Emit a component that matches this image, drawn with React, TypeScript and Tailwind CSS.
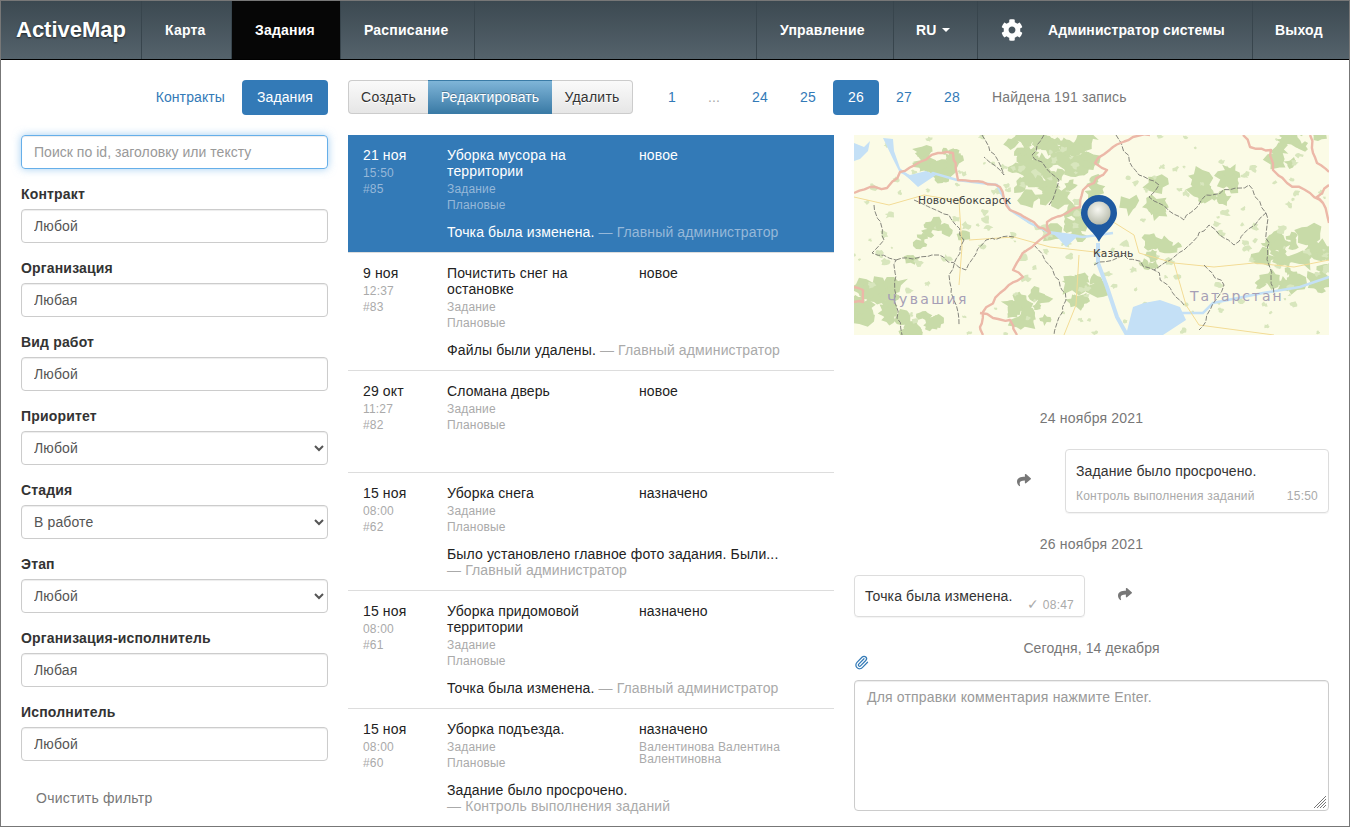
import { FaCog, FaShare } from 'react-icons/fa';
import { Paperclip } from 'lucide-react';

type Task = {
  date: string;
  time: string;
  id: string;
  title: string;
  status: string;
  assignee?: string;
  comment?: string;
  author?: string;
  active?: boolean;
};

const tasks: Task[] = [
  { date: '21 ноя', time: '15:50', id: '#85', title: 'Уборка мусора на территории', status: 'новое', comment: 'Точка была изменена.', author: '— Главный администратор', active: true },
  { date: '9 ноя', time: '12:37', id: '#83', title: 'Почистить снег на остановке', status: 'новое', comment: 'Файлы были удалены.', author: '— Главный администратор' },
  { date: '29 окт', time: '11:27', id: '#82', title: 'Сломана дверь', status: 'новое' },
  { date: '15 ноя', time: '08:00', id: '#62', title: 'Уборка снега', status: 'назначено', comment: 'Было установлено главное фото задания. Были...', author: '— Главный администратор' },
  { date: '15 ноя', time: '08:00', id: '#61', title: 'Уборка придомовой территории', status: 'назначено', comment: 'Точка была изменена.', author: '— Главный администратор' },
  { date: '15 ноя', time: '08:00', id: '#60', title: 'Уборка подъезда.', status: 'назначено', assignee: 'Валентинова Валентина Валентиновна', comment: 'Задание было просрочено.', author: '— Контроль выполнения заданий' },
];

const filters = [
  { label: 'Контракт', value: 'Любой' },
  { label: 'Организация', value: 'Любая' },
  { label: 'Вид работ', value: 'Любой' },
  { label: 'Приоритет', value: 'Любой', select: true },
  { label: 'Стадия', value: 'В работе', select: true },
  { label: 'Этап', value: 'Любой', select: true },
  { label: 'Организация-исполнитель', value: 'Любая' },
  { label: 'Исполнитель', value: 'Любой' },
];

const pages = [
  { n: '1', w: 'w-[38px]' },
  { n: '...', w: 'w-[42px]', muted: true },
  { n: '24', w: 'w-[46px]' },
  { n: '25', w: 'w-[46px]' },
  { n: '26', w: 'w-[46px]', active: true },
  { n: '27', w: 'w-[46px]' },
  { n: '28', w: 'w-[46px]' },
];

// простой детерминированный шум для карты
const noise = (i: number) => {
  const v = Math.sin(i * 12.9898) * 43758.5453;
  return v - Math.floor(v);
};

// неровное пятно леса вокруг точки
function blob(cx: number, cy: number, r: number, seed: number) {
  const n = 11;
  const pts: string[] = [];
  for (let i = 0; i < n; i++) {
    const a = (i / n) * Math.PI * 2;
    const rr = r * (0.45 + noise(seed * 31 + i) * 0.85);
    pts.push(`${(cx + Math.cos(a) * rr).toFixed(1)},${(cy + Math.sin(a) * rr * 0.8).toFixed(1)}`);
  }
  return pts.join(' ');
}

// ломаная с зубчатыми сегментами, как границы на карте
function jag(points: number[][], amp: number, seed: number) {
  let d = '';
  let k = seed;
  points.forEach(([x, y], i) => {
    if (i === 0) {
      d += `M${x} ${y}`;
      return;
    }
    const [px, py] = points[i - 1];
    const steps = Math.max(2, Math.round(Math.hypot(x - px, y - py) / 6));
    for (let s = 1; s <= steps; s++) {
      const t = s / steps;
      const jx = s === steps ? 0 : (noise(k++) - 0.5) * amp * 2;
      const jy = s === steps ? 0 : (noise(k++) - 0.5) * amp * 2;
      d += ` L${(px + (x - px) * t + jx).toFixed(1)} ${(py + (y - py) * t + jy).toFixed(1)}`;
    }
  });
  return d;
}

// крупные лесные массивы: [x, y, разброс, количество]
const clusters = [
  [200, 30, 42, 60],
  [85, 30, 18, 14],
  [18, 165, 24, 22],
  [60, 190, 22, 10],
  [215, 90, 18, 8],
  [440, 125, 36, 30],
  [440, 8, 30, 10],
  [360, 50, 20, 12],
  [225, 150, 22, 12],
  [170, 170, 22, 12],
  [310, 120, 22, 10],
  [290, 60, 22, 6],
  [80, 100, 30, 8],
];

const forestBlobs = clusters.flatMap(([cx, cy, spread, count], c) =>
  Array.from({ length: count }, (_, i) => {
    const seed = c * 100 + i;
    const x = cx + (noise(seed + 1) - 0.5) * spread * 2;
    const y = cy + (noise(seed + 2) - 0.5) * spread * 1.6;
    return blob(x, y, 4 + noise(seed + 3) * 9, seed);
  }),
);

const speckles = Array.from({ length: 170 }, (_, i) =>
  blob(noise(i + 500) * 475, noise(i + 900) * 200, 1.5 + noise(i + 1300) * 3.5, i + 2000),
);

const adminLines = [
  [[20, 70], [30, 105], [18, 118], [42, 125], [40, 165], [48, 200]],
  [[42, 125], [85, 120], [112, 135], [132, 105], [160, 102]],
  [[60, 65], [95, 80], [110, 105]],
  [[190, 0], [178, 20], [205, 45], [195, 70]],
  [[180, 110], [205, 145], [212, 165], [200, 200]],
  [[262, 0], [285, 40], [305, 50], [295, 62], [330, 85], [352, 60], [395, 50], [412, 78], [380, 110], [355, 90], [330, 115], [300, 135], [330, 170]],
  [[412, 78], [415, 130], [420, 160]],
  [[240, 130], [270, 120], [300, 135]],
  [[128, 0], [150, 40], [130, 22]],
  [[110, 105], [95, 140], [105, 190]],
  [[350, 130], [370, 150], [345, 195]],
];

const regionLines = [
  [[0, 58], [16, 52], [33, 53], [46, 37], [66, 27], [84, 18], [99, 18], [104, 45], [129, 47], [146, 52], [156, 75], [176, 85], [196, 98], [178, 112], [166, 123], [159, 135], [169, 142], [146, 158], [129, 177], [126, 192], [129, 200]],
  [[196, 98], [193, 87], [213, 78], [226, 72], [229, 55], [253, 35], [241, 28], [259, 12], [279, 2], [296, 0]],
  [[389, 0], [396, 12], [417, 15], [419, 35], [433, 48], [456, 58], [469, 68], [475, 88]],
  [[456, 0], [463, 28], [475, 37]],
  [[475, 50], [463, 62], [469, 68]],
  [[0, 152], [9, 155], [9, 167], [0, 167]],
  [[126, 178], [139, 183], [156, 185], [163, 200]],
];

function MapView() {
  return (
    <svg viewBox="0 0 475 200" className="block w-full h-[200px]">
      <defs>
        <filter id="tileSoft">
          <feGaussianBlur stdDeviation="0.35" />
        </filter>
        <radialGradient id="markerPhoto" cx="0.45" cy="0.35" r="0.7">
          <stop offset="0" stopColor="#f7f7f1" />
          <stop offset="1" stopColor="#b4b8a8" />
        </radialGradient>
      </defs>
      <rect width="475" height="200" fill="#fbfbe6" />
      <g filter="url(#tileSoft)">
        {forestBlobs.map((p, i) => (
          <polygon key={i} points={p} fill="#c8dba8" />
        ))}
        {speckles.map((p, i) => (
          <polygon key={i} points={p} fill="#d8e6bd" />
        ))}
        {/* вода */}
        <path d="M0 8 L10 12 L16 6 L14 16 L6 24 L0 26 Z" fill="#c4e0f6" />
        <path d="M29 3 L39 4 L40 16 L46 33 L52 40 L46 38 L38 22 Z" fill="#c4e0f6" />
        <path d="M46 35 L63 48 L79 38 L103 45 L143 50 L156 75 L176 88 L196 98 L229 102 L259 98" fill="none" stroke="#c4e0f6" strokeWidth="2.5" />
        <path d="M46 35 L56 40 L72 36 L82 40 L64 52 Z" fill="#c4e0f6" />
        <path d="M196 96 L225 100 L212 112 L205 104 Z" fill="#c4e0f6" />
        <path d="M244 108 L244 128 L253 152 L263 182 L273 200" fill="none" stroke="#c4e0f6" strokeWidth="4" />
        <path d="M272 200 L279 172 L290 168 L306 165 L326 172 L332 185 L309 200 Z" fill="#c4e0f6" />
        <path d="M326 178 L349 178 L359 168 L409 158 L446 152 L475 142" fill="none" stroke="#c4e0f6" strokeWidth="2.5" />
        {/* дороги */}
        <path d="M0 62 L35 70 L70 60 L105 66 M115 105 L160 102 L196 112 L250 118 M256 85 L280 100 L285 118 L320 128 L360 132 L400 128 L440 132 L475 125 M105 66 L108 112 L105 150 M225 120 L222 170 L210 200 M320 128 L332 170 L345 190 L420 200" fill="none" stroke="#f3dc96" strokeWidth="1" />
        {/* границы районов */}
        {adminLines.map((l, i) => (
          <path key={i} d={jag(l, 1.8, i * 40 + 7)} fill="none" stroke="#777771" strokeWidth="0.9" strokeDasharray="5 1.5" />
        ))}
        {/* границы регионов */}
        {regionLines.map((l, i) => (
          <path key={i} d={jag(l, 1.6, i * 70 + 3)} fill="none" stroke="#ecb8a8" strokeWidth="2.4" strokeLinejoin="round" />
        ))}
      </g>
      <g fontFamily="'DejaVu Sans', sans-serif">
        <text x="64" y="69" fontSize="10.7" fill="#3d3d3d">Новочебоксарск</text>
        <text x="239" y="122" fontSize="10.7" fill="#3d3d3d">Казань</text>
        <text x="33" y="169" fontSize="14" letterSpacing="2.4" fill="#a69fb6">Чувашия</text>
        <text x="336" y="166" fontSize="14" letterSpacing="1.9" fill="#a69fb6">Татарстан</text>
      </g>
      {/* маркер */}
      <path d="M245 107 C240 96 227 90 227 78 A18 18 0 0 1 263 78 C263 90 250 96 245 107 Z" fill="#1f5aa1" />
      <circle cx="245" cy="78" r="11.5" fill="url(#markerPhoto)" />
    </svg>
  );
}

function NavItem({ label, className }: { label: string; className: string }) {
  return (
    <a className={`flex items-center shrink-0 h-full border-r border-[#38454d] font-bold text-sm tracking-[0.2px] text-white whitespace-nowrap ${className}`}>
      {label}
    </a>
  );
}

function TaskRow({ task }: { task: Task }) {
  const muted = task.active ? 'text-[#96b8d9]' : 'text-[#aaaaaa]';
  const small = `text-xs tracking-[0.18px] ${muted}`;
  return (
    <div className={`pt-3 pb-3 pl-[15px] border-b border-[#dddddd] ${task.active ? 'bg-[#337ab7] text-white' : 'text-[#222222]'}`}>
      <div className="flex leading-4">
        <div className="w-[84px] shrink-0">
          <div>{task.date}</div>
          <div className={`mt-[2px] ${small}`}>{task.time}</div>
          <div className={small}>{task.id}</div>
        </div>
        <div className="flex-1 min-w-0">
          <div className="flex">
            <div className="w-[192px] shrink-0 pr-[30px]">
              <div>{task.title}</div>
              <div className={`mt-[2px] ${small}`}>Задание</div>
              <div className={small}>Плановые</div>
            </div>
            <div className="flex-1">
              <div>{task.status}</div>
              {task.assignee && <div className={`mt-[4px] w-[160px] leading-3 ${small}`}>{task.assignee}</div>}
            </div>
          </div>
          <p className="mt-[11px] min-h-4 pr-[14px]">
            {task.comment} {task.author && <span className={`inline-block ${muted}`}>{task.author}</span>}
          </p>
        </div>
      </div>
    </div>
  );
}

export default function App() {
  return (
    <div className="h-[827px] overflow-hidden border border-[#777777] bg-white text-sm leading-5 tracking-[0.13px] text-[#333333] font-['Liberation_Sans',Arial,sans-serif]">
      <nav className="flex h-[59px] border-b border-black bg-gradient-to-b from-[#3c4951] to-[#55636c]">
        <a className="flex items-center shrink-0 w-[141px] h-full pl-[15px] border-r border-[#38454d] font-bold text-[22px] tracking-normal text-white [text-shadow:0_1px_2px_rgba(0,0,0,0.6)]">
          ActiveMap
        </a>
        <NavItem label="Карта" className="w-[90px] pl-[23px]" />
        <NavItem label="Задания" className="w-[109px] pl-[23px] bg-[#060606]" />
        <NavItem label="Расписание" className="w-[134px] pl-[23px]" />
        <div className="flex-1 border-r border-[#38454d]" />
        <NavItem label="Управление" className="w-[137px] pl-[23px]" />
        <a className="flex items-center shrink-0 w-[84px] h-full pl-[22px] border-r border-[#38454d] font-bold text-white">
          RU
          <span className="ml-[6px] w-0 h-0 border-x-4 border-t-4 border-x-transparent border-t-white" />
        </a>
        <a className="flex items-center shrink-0 w-[275px] h-full pl-[23px] border-r border-[#38454d] font-bold tracking-[0.1px] text-white whitespace-nowrap">
          <FaCog size={22} className="mr-[25px]" />
          Администратор системы
        </a>
        <NavItem label="Выход" className="w-[96px] pl-[22px] border-r-0" />
      </nav>

      <div className="flex px-[20px] pt-[20px] pb-[20px]">
        <div className="flex justify-end items-center gap-[2px] w-[307px] h-[35px]">
          <a className="flex items-center h-[35px] pb-px px-[15px] tracking-[0.1px] text-[#337ab7]">Контракты</a>
          <a className="flex items-center h-[35px] pb-px px-[15px] rounded tracking-[0.1px] bg-[#337ab7] text-white">Задания</a>
        </div>
        <div className="flex items-center ml-[20px] h-[35px]">
          <div className="flex h-[34px] self-start">
            <button className="w-[80px] rounded-l border border-[#cccccc] border-r-0 bg-gradient-to-b from-[#fafafa] to-[#e6e6e6] tracking-[0.25px] text-[#333333] [text-shadow:0_1px_0_#fff]">Создать</button>
            <button className="w-[124px] bg-gradient-to-b from-[#7fb5d8] to-[#3a7ba6] text-white border-y border-[#3a7ba6] tracking-[0.15px] [text-shadow:0_-1px_0_rgba(0,0,0,0.25)]">Редактировать</button>
            <button className="w-[81px] rounded-r border border-[#cccccc] border-l-0 bg-gradient-to-b from-[#fafafa] to-[#e6e6e6] tracking-[0.25px] text-[#333333] [text-shadow:0_1px_0_#fff]">Удалить</button>
          </div>
          <div className="flex gap-[2px] ml-[20px]">
            {pages.map((p) => (
              <a
                key={p.n}
                className={`${p.w} h-[35px] pb-px flex items-center justify-center rounded ${p.active ? 'bg-[#337ab7] text-white' : p.muted ? 'text-[#aaaaaa]' : 'text-[#337ab7]'}`}
              >
                {p.n}
              </a>
            ))}
          </div>
          <span className="ml-[17px] pb-px text-[#777777]">Найдена 191 запись</span>
        </div>
      </div>

      <div className="flex gap-[20px] px-[20px]">
        <aside className="w-[307px] shrink-0">
          <input
            placeholder="Поиск по id, заголовку или тексту"
            className="block w-full h-[34px] px-3 rounded border border-[#66afe9] outline-none tracking-[0.03px] text-[#555555] placeholder:text-[#999999] shadow-[inset_0_1px_1px_rgba(0,0,0,0.075),0_0_8px_rgba(102,175,233,0.6)]"
          />
          {filters.map((f) => (
            <div key={f.label} className="mt-[15px]">
              <label className="block mb-[5px] font-bold tracking-[0.17px] text-[#333333]">{f.label}</label>
              {f.select ? (
                <select
                  defaultValue={f.value}
                  className="block w-full h-[34px] px-2 rounded border border-[#cccccc] bg-white text-[#555555] shadow-[inset_0_1px_1px_rgba(0,0,0,0.075)]"
                >
                  <option>{f.value}</option>
                </select>
              ) : (
                <input
                  readOnly
                  value={f.value}
                  className="block w-full h-[34px] px-3 rounded border border-[#cccccc] outline-none text-[#555555] shadow-[inset_0_1px_1px_rgba(0,0,0,0.075)]"
                />
              )}
            </div>
          ))}
          <button className="mt-[20px] px-[15px] py-[7px] tracking-[0.25px] text-[#777777]">Очистить фильтр</button>
        </aside>

        <main className="w-[486px] shrink-0">
          {tasks.map((t) => (
            <TaskRow key={t.id} task={t} />
          ))}
        </main>

        <section className="w-[475px] shrink-0">
          <MapView />
          <div className="mt-[73px] text-center tracking-[0.2px] text-[#777777]">24 ноября 2021</div>
          <div className="flex items-center justify-end mt-[21px]">
            <FaShare size={14} className="mr-[34px] -mt-[2px] text-[#777777]" />
            <div className="w-[264px] h-[64px] px-[10px] pt-[11px] rounded border border-[#dddddd] shadow-[0_1px_1px_rgba(0,0,0,0.05)]">
              <div className="text-[#333333]">Задание было просрочено.</div>
              <div className="flex justify-between mt-[7px] text-xs leading-4 tracking-[0.22px] text-[#aaaaaa]">
                <span>Контроль выполнения заданий</span>
                <span>15:50</span>
              </div>
            </div>
          </div>
          <div className="mt-[21px] text-center tracking-[0.2px] text-[#777777]">26 ноября 2021</div>
          <div className="flex items-center mt-[21px]">
            <div className="flex justify-between w-[231px] h-[42px] px-[10px] pt-[10px] rounded border border-[#dddddd] shadow-[0_1px_1px_rgba(0,0,0,0.05)]">
              <span className="text-[#333333]">Точка была изменена.</span>
              <span className="mt-[8px] text-xs leading-4 tracking-[0.22px] text-[#aaaaaa]"><span className="text-sm">✓</span> 08:47</span>
            </div>
            <FaShare size={14} className="ml-[33px] -mt-[4px] text-[#777777]" />
          </div>
          <div className="mt-[21px] text-center tracking-[0.1px] text-[#777777]">Сегодня, 14 декабря</div>
          <Paperclip size={15} className="mt-[-3px] text-[#337ab7]" />
          <div className="relative mt-[10px]">
            <textarea
              placeholder="Для отправки комментария нажмите Enter."
              className="block w-full h-[131px] px-3 py-[6px] rounded border border-[#cccccc] outline-none resize-none tracking-[0.17px] placeholder:text-[#999999] shadow-[inset_0_1px_1px_rgba(0,0,0,0.075)]"
            />
            <svg viewBox="0 0 14 14" className="absolute right-[2px] bottom-[2px] w-[14px] h-[14px]">
              <path d="M1 13 L13 1 M4 13 L13 4 M7 13 L13 7 M10 13 L13 10" stroke="#777777" strokeWidth="1" fill="none" />
            </svg>
          </div>
        </section>
      </div>
    </div>
  );
}
